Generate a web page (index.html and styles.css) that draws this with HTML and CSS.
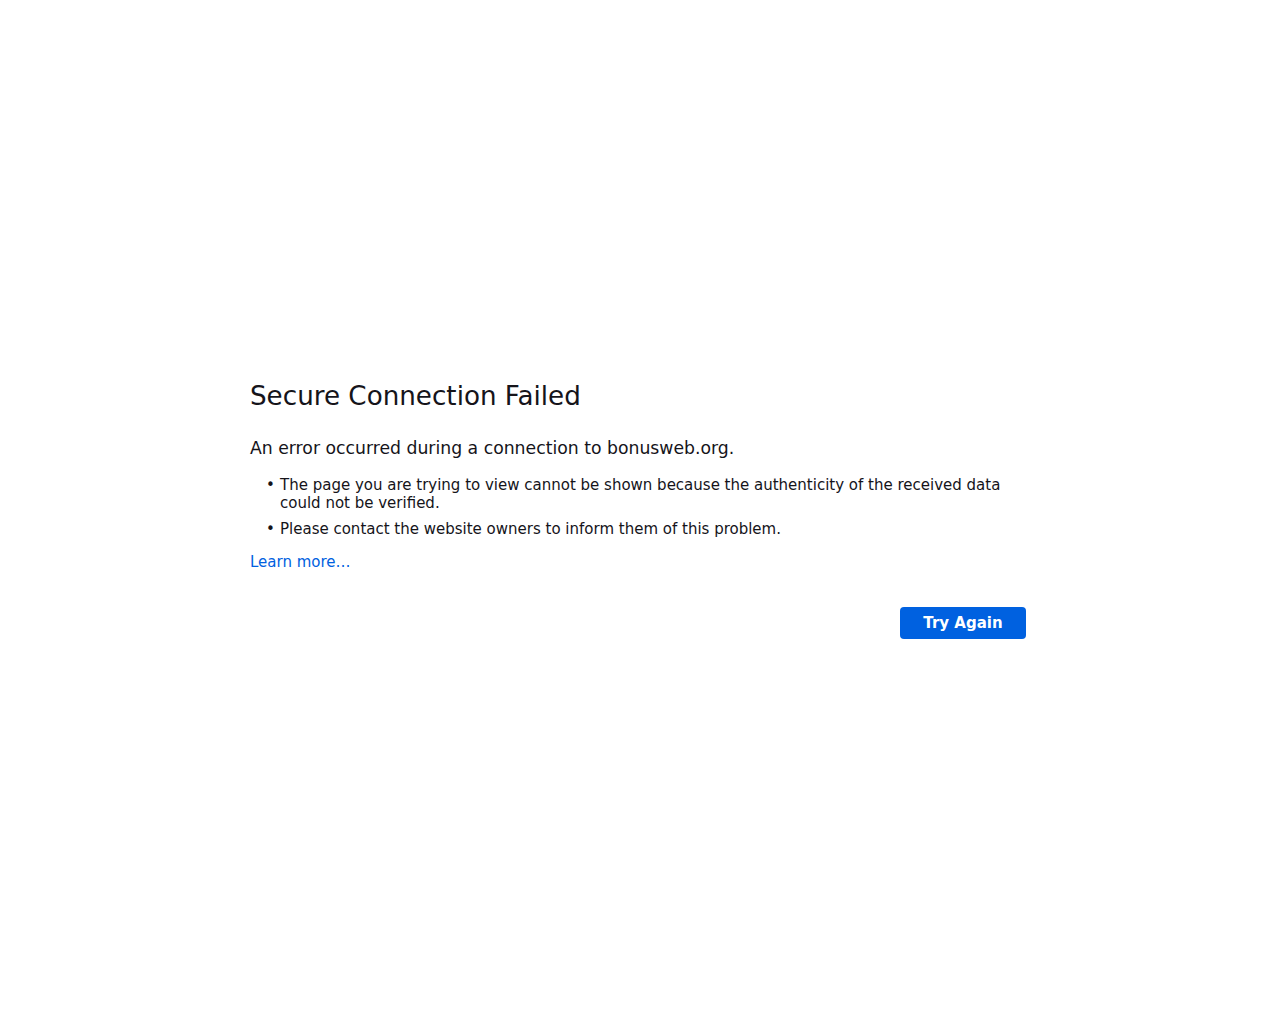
FILE: index.html
```html
<!DOCTYPE html>
<html lang="en">
<head>
<meta charset="utf-8">
<title>Secure Connection Failed</title>
<link rel="stylesheet" href="styles.css">
</head>
<body>
<div class="container">
  <h1 class="title">Secure Connection Failed</h1>
  <p class="short-desc">An error occurred during a connection to bonusweb.org.</p>
  <ul class="long-desc">
    <li>The page you are trying to view cannot be shown because the authenticity of the received data could not be verified.</li>
    <li>Please contact the website owners to inform them of this problem.</li>
  </ul>
  <a class="learn-more" href="#">Learn more…</a>
  <div class="actions">
    <button class="primary" type="button">Try Again</button>
  </div>
</div>
</body>
</html>
```

FILE: styles.css
```css
html, body {
  margin: 0;
  padding: 0;
  background: #ffffff;
}

body {
  min-height: 100vh;
  display: flex;
  align-items: center;
  justify-content: center;
  font-family: "DejaVu Sans", sans-serif;
  font-size: 15px;
  color: #15141a;
}

.container {
  width: 780px;
}

.title {
  font-size: 26.2px;
  font-weight: normal;
  line-height: normal;
  margin: 0 0 27px;
}

.short-desc {
  font-size: 17.25px;
  margin: 0 0 18px;
}

.long-desc {
  list-style: none;
  margin: 0 0 15px;
  padding-left: 30px;
}

.long-desc li {
  margin-bottom: 8px;
}

.long-desc li::before {
  content: "•";
  display: inline-block;
  width: 14px;
  margin-left: -14px;
}

.long-desc li:last-child {
  margin-bottom: 0;
}

.learn-more {
  display: inline-block;
  color: #0061e0;
  text-decoration: none;
}

.actions {
  display: flex;
  justify-content: flex-end;
  margin-top: 32px;
}

.primary {
  font-family: "DejaVu Sans", sans-serif;
  font-size: 15px;
  font-weight: bold;
  color: #ffffff;
  background: #0061e0;
  border: none;
  border-radius: 4px;
  width: 126px;
  height: 32px;
  margin: 4px;
  padding: 0 16px;
}
```
